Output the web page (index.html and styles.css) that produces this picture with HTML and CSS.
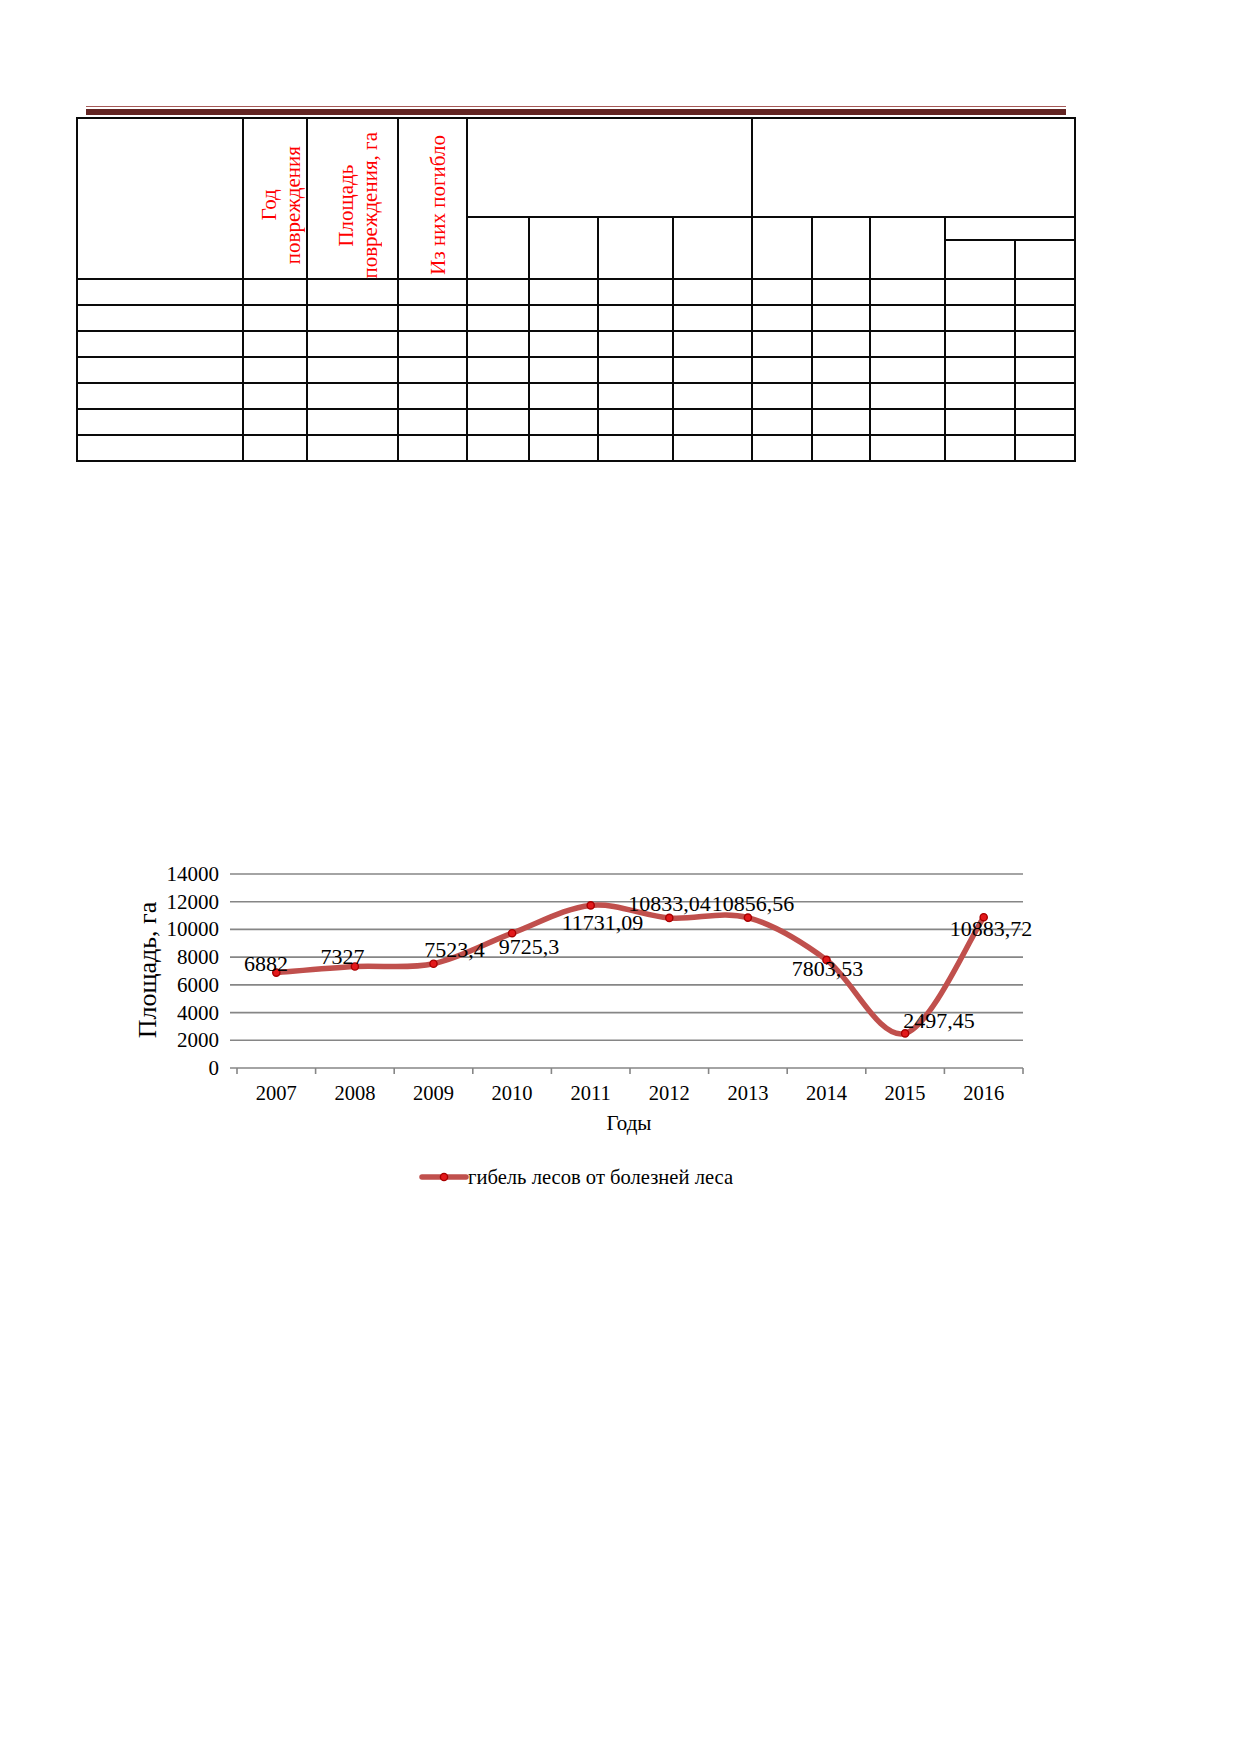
FILE: index.html
```html
<!DOCTYPE html>
<html lang="ru">
<head>
<meta charset="utf-8">
<title>Гибель лесов от болезней</title>
<link rel="stylesheet" href="styles.css">
</head>
<body>
<div class="page">
  <div class="rule"></div>
  <table class="form">
    <colgroup>
      <col class="c1"><col class="c2"><col class="c3"><col class="c4"><col class="c5"><col class="c6"><col class="c7"><col class="c8"><col class="c9"><col class="c10"><col class="c11"><col class="c12"><col class="c13">
    </colgroup>
    <thead>
      <tr class="h1">
        <th rowspan="3"></th>
        <th rowspan="3"><div class="vwrap"><div class="vtext">Год<br>повреждения</div></div></th>
        <th rowspan="3"><div class="vwrap"><div class="vtext">Площадь<br>повреждения, га</div></div></th>
        <th rowspan="3"><div class="vwrap"><div class="vtext">Из них погибло</div></div></th>
        <th colspan="4"></th>
        <th colspan="5"></th>
      </tr>
      <tr class="h2">
        <th rowspan="2"></th><th rowspan="2"></th><th rowspan="2"></th><th rowspan="2"></th>
        <th rowspan="2"></th><th rowspan="2"></th><th rowspan="2"></th>
        <th colspan="2"></th>
      </tr>
      <tr class="h3">
        <th></th><th></th>
      </tr>
    </thead>
    <tbody>
      <tr><td></td><td></td><td></td><td></td><td></td><td></td><td></td><td></td><td></td><td></td><td></td><td></td><td></td></tr>
      <tr><td></td><td></td><td></td><td></td><td></td><td></td><td></td><td></td><td></td><td></td><td></td><td></td><td></td></tr>
      <tr><td></td><td></td><td></td><td></td><td></td><td></td><td></td><td></td><td></td><td></td><td></td><td></td><td></td></tr>
      <tr><td></td><td></td><td></td><td></td><td></td><td></td><td></td><td></td><td></td><td></td><td></td><td></td><td></td></tr>
      <tr><td></td><td></td><td></td><td></td><td></td><td></td><td></td><td></td><td></td><td></td><td></td><td></td><td></td></tr>
      <tr><td></td><td></td><td></td><td></td><td></td><td></td><td></td><td></td><td></td><td></td><td></td><td></td><td></td></tr>
      <tr><td></td><td></td><td></td><td></td><td></td><td></td><td></td><td></td><td></td><td></td><td></td><td></td><td></td></tr>
    </tbody>
  </table>

  <svg class="chart" width="960" height="340" viewBox="100 860 960 340" xmlns="http://www.w3.org/2000/svg">
    <g class="grid">
      <line x1="230" y1="874" x2="1023" y2="874"/>
      <line x1="230" y1="901.7" x2="1023" y2="901.7"/>
      <line x1="230" y1="929.4" x2="1023" y2="929.4"/>
      <line x1="230" y1="957.1" x2="1023" y2="957.1"/>
      <line x1="230" y1="984.9" x2="1023" y2="984.9"/>
      <line x1="230" y1="1012.6" x2="1023" y2="1012.6"/>
      <line x1="230" y1="1040.3" x2="1023" y2="1040.3"/>
      <line x1="230" y1="1068" x2="1023" y2="1068"/>
      <line x1="237" y1="1068" x2="237" y2="1074"/>
      <line x1="315.6" y1="1068" x2="315.6" y2="1074"/>
      <line x1="394.2" y1="1068" x2="394.2" y2="1074"/>
      <line x1="472.8" y1="1068" x2="472.8" y2="1074"/>
      <line x1="551.4" y1="1068" x2="551.4" y2="1074"/>
      <line x1="630" y1="1068" x2="630" y2="1074"/>
      <line x1="708.6" y1="1068" x2="708.6" y2="1074"/>
      <line x1="787.2" y1="1068" x2="787.2" y2="1074"/>
      <line x1="865.8" y1="1068" x2="865.8" y2="1074"/>
      <line x1="944.4" y1="1068" x2="944.4" y2="1074"/>
      <line x1="1023" y1="1068" x2="1023" y2="1074"/>
    </g>
    <g class="ylabels">
      <text x="219" y="881">14000</text>
      <text x="219" y="908.7">12000</text>
      <text x="219" y="936.4">10000</text>
      <text x="219" y="964.1">8000</text>
      <text x="219" y="991.9">6000</text>
      <text x="219" y="1019.6">4000</text>
      <text x="219" y="1047.3">2000</text>
      <text x="219" y="1075">0</text>
    </g>
    <g class="xlabels">
      <text x="276.3" y="1100">2007</text>
      <text x="354.9" y="1100">2008</text>
      <text x="433.5" y="1100">2009</text>
      <text x="512.1" y="1100">2010</text>
      <text x="590.7" y="1100">2011</text>
      <text x="669.3" y="1100">2012</text>
      <text x="747.9" y="1100">2013</text>
      <text x="826.5" y="1100">2014</text>
      <text x="905.1" y="1100">2015</text>
      <text x="983.7" y="1100">2016</text>
    </g>
    <text class="ytitle" transform="translate(156 970) rotate(-90)">Площадь, га</text>
    <text class="xtitle" x="629" y="1130">Годы</text>

    <path class="series" d="M276.3,972.6 C289.4,971.6 328.7,968.0 354.9,966.5 C381.1,965.0 407.3,969.3 433.5,963.75 C459.7,958.2 485.9,942.9 512.1,933.2 C538.3,923.5 564.5,907.95 590.7,905.4 C616.9,902.85 643.1,915.87 669.3,917.9 C695.5,919.93 721.7,910.6 747.9,917.6 C774.1,924.6 800.3,940.6 826.5,959.9 C852.7,979.2 878.9,1040.5 905.1,1033.4 C931.3,1026.3 970.6,936.6 983.7,917.2"/>
    <g class="markers">
      <circle cx="276.3" cy="972.6" r="3.6"/>
      <circle cx="354.9" cy="966.5" r="3.6"/>
      <circle cx="433.5" cy="963.75" r="3.6"/>
      <circle cx="512.1" cy="933.2" r="3.6"/>
      <circle cx="590.7" cy="905.4" r="3.6"/>
      <circle cx="669.3" cy="917.9" r="3.6"/>
      <circle cx="747.9" cy="917.6" r="3.6"/>
      <circle cx="826.5" cy="959.9" r="3.6"/>
      <circle cx="905.1" cy="1033.4" r="3.6"/>
      <circle cx="983.7" cy="917.2" r="3.6"/>
    </g>
    <g class="dlabels">
      <text x="266" y="971">6882</text>
      <text x="342.5" y="963.5">7327</text>
      <text x="454.5" y="957">7523,4</text>
      <text x="529" y="954">9725,3</text>
      <text x="602.5" y="930">11731,09</text>
      <text x="669.5" y="911">10833,04</text>
      <text x="753" y="911">10856,56</text>
      <text x="827.5" y="976">7803,53</text>
      <text x="939" y="1028">2497,45</text>
      <text x="991" y="936">10883,72</text>
    </g>
    <g class="legend">
      <line class="series" x1="422" y1="1177" x2="466" y2="1177"/>
      <circle class="lmark" cx="444" cy="1177" r="3.6"/>
      <text x="468" y="1184">гибель лесов от болезней леса</text>
    </g>
  </svg>
</div>
</body>
</html>
```

FILE: styles.css
```css
html, body {
  margin: 0;
  padding: 0;
  background: #ffffff;
}

.page {
  padding-top: 106px;
  font-family: "Liberation Serif", "Times New Roman", serif;
}

.rule {
  margin-left: 86px;
  width: 980px;
  height: 6px;
  padding-top: 2px;
  border-top: 1px solid #a65a58;
  background: #632523;
  background-clip: content-box;
}

.form {
  margin: 2px 0 0 76px;
  width: 1000px;
  table-layout: fixed;
  border-collapse: collapse;
}

.form th,
.form td {
  border: 2px solid #0a0a0a;
  padding: 0;
  font-weight: normal;
}

.c1 { width: 166px; }
.c2 { width: 64px; }
.c3 { width: 91px; }
.c4 { width: 69px; }
.c5 { width: 62px; }
.c6 { width: 69px; }
.c7 { width: 75px; }
.c8 { width: 79px; }
.c9 { width: 60px; }
.c10 { width: 58px; }
.c11 { width: 75px; }
.c12 { width: 70px; }
.c13 { width: 60px; }

.h1 { height: 99px; }
.h2 { height: 23px; }
.h3 { height: 39px; }
.form tbody tr { height: 26px; }

.vwrap {
  display: flex;
  align-items: center;
  justify-content: center;
  height: 159px;
  padding: 13px 0 0 11px;
  box-sizing: border-box;
}

.vtext {
  writing-mode: vertical-rl;
  transform: rotate(180deg);
  text-align: center;
  white-space: nowrap;
  font-family: "Liberation Serif", "Times New Roman", serif;
  font-size: 21px;
  line-height: 24px;
  color: #ff0000;
}

.chart {
  display: block;
  margin: 398px 0 0 100px;
  font-family: "Liberation Serif", "Times New Roman", serif;
}

.grid line {
  stroke: #868686;
  stroke-width: 1.6;
}

.ylabels text {
  font-size: 21px;
  text-anchor: end;
  fill: #000000;
}

.xlabels text {
  font-size: 20.5px;
  text-anchor: middle;
  fill: #000000;
}

.ytitle {
  font-size: 26px;
  text-anchor: middle;
  fill: #000000;
}

.xtitle {
  font-size: 21px;
  text-anchor: middle;
  fill: #000000;
}

.series {
  fill: none;
  stroke: #c0504d;
  stroke-width: 5.5;
  stroke-linecap: round;
  stroke-linejoin: round;
}

.markers circle,
.lmark {
  fill: #e3191b;
  stroke: #a80000;
  stroke-width: 1.4;
}

.dlabels text {
  font-size: 22px;
  text-anchor: middle;
  fill: #000000;
}

.legend text {
  font-size: 20.6px;
  fill: #000000;
}
```
